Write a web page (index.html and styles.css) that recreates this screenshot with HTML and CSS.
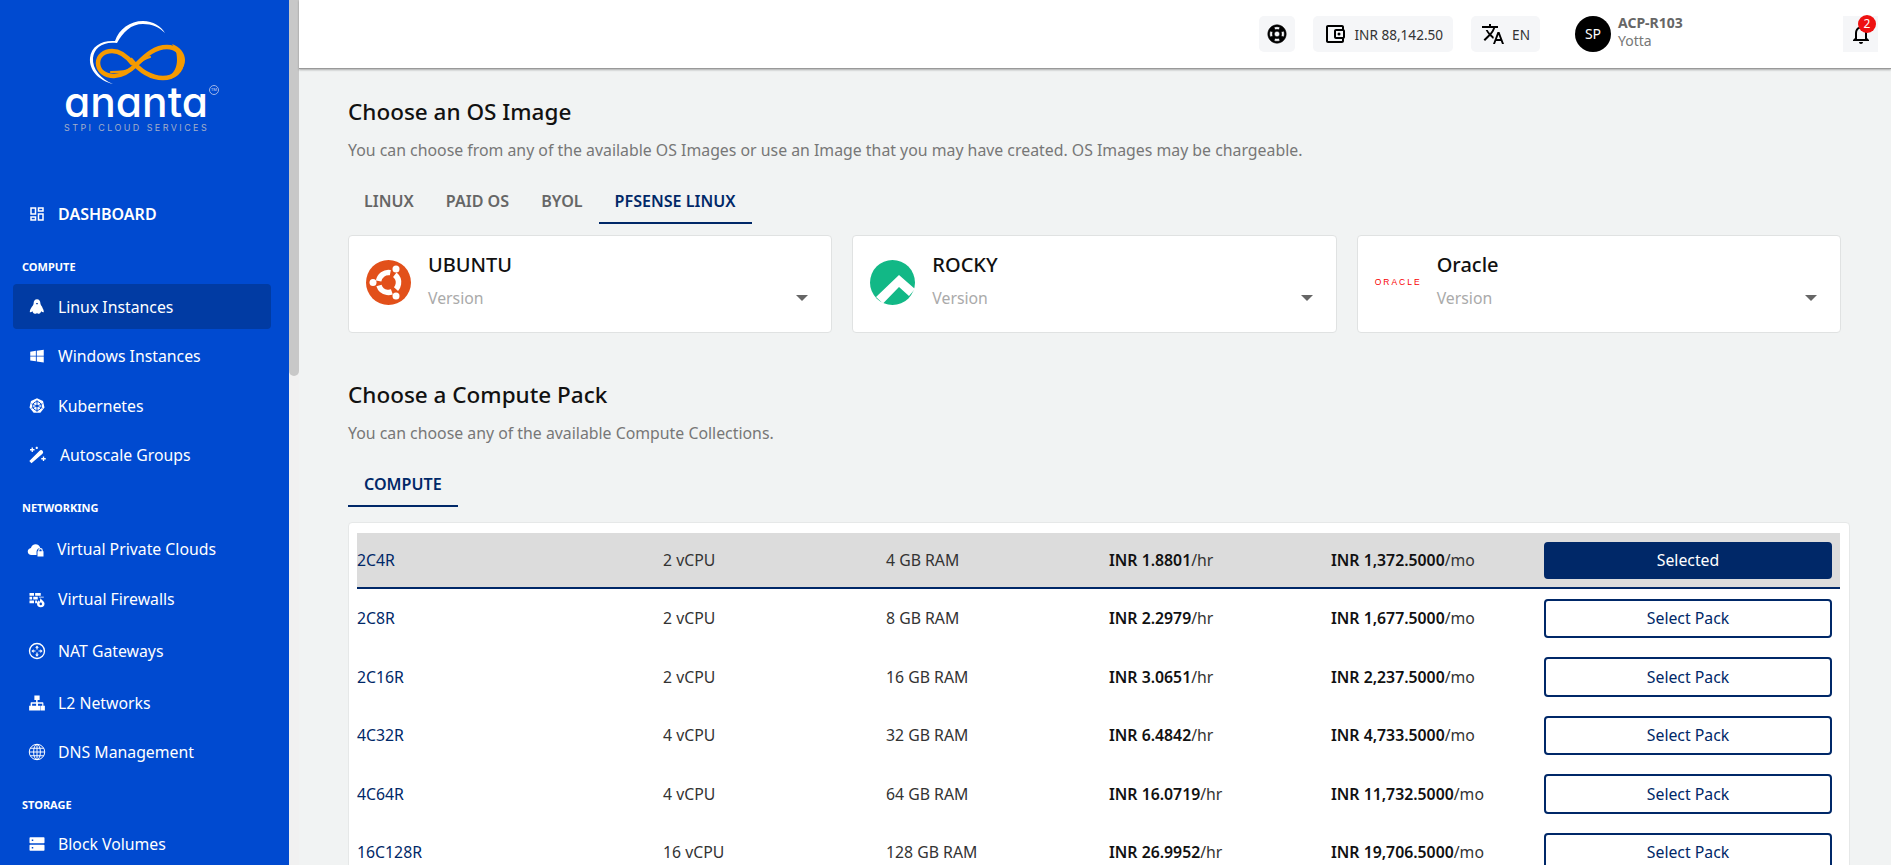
FILE: index.html
```html
<!DOCTYPE html>
<html lang="en">
<head>
  <meta charset="UTF-8">
  <title>Ananta - Create Instance</title>
  <link rel="stylesheet" href="styles.css">
</head>
<body>
  <aside class="sidebar">
    <div class="logo">
      <svg class="logo-mark" viewBox="0 0 100 68" width="100" height="68">
        <path d="M25 64C10 60 1 50 2 38 3 26 14 20 27 21 31 9 42 1 55 1c10 0 18 5 22 12-6-6-13-9-22-9-12 0-20 8-26 19C15 21 6 28 5 38c-1 11 8 21 20 26z" fill="#fff"/>
        <path d="M62 37C54 39 49 45 43 49c-5 3-11 3-20 3" fill="none" stroke="#f59a00" stroke-width="2.2" stroke-linecap="round"/>
        <path d="M45 44C38 35 31 31 24 31c-8 0-14 5-14 12 0 8 7 13 16 13 9 0 16-5 23-12 9-9 18-17 30-17 8 0 15 5 15 14 0 10-8 17-19 17-14 0-24-8-33-19" fill="none" stroke="#f59a00" stroke-width="4.5"/>
        <path d="M84 24c8 3 13 9 13 16 0 8-6 15-17 17 6-4 9-10 9-17 0-6-1-11-5-16z" fill="#f59a00"/>
      </svg>
      <div class="logo-line">
        <div class="logo-word">ananta</div>
        <div class="logo-tm">TM</div>
      </div>
      <div class="logo-sub">STPI CLOUD SERVICES</div>
    </div>

    <nav class="nav">
      <a class="nav-item nav-item--main">
        <svg class="nav-icon" viewBox="0 0 24 24"><path d="M19 5v2h-4V5h4M9 5v6H5V5h4m10 8v6h-4v-6h4M9 17v2H5v-2h4M21 3h-8v6h8V3zM11 3H3v10h8V3zm10 8h-8v10h8V11zm-10 4H3v6h8v-6z"/></svg>
        DASHBOARD
      </a>

      <div class="nav-label">COMPUTE</div>
      <a class="nav-item nav-item--active">
        <svg class="nav-icon" viewBox="0 0 24 24">
          <path d="M12 1.500C9 1.500 7.500 4 7.500 7c0 2.500-2 4-3.500 6.500-1.200 2-1.800 4-1.500 5.500 1 .3 2.500-.3 3.500-1.500.5 1.800 1.500 3 3 3.500H11l1-1.500 1 1.500h1.500c1.500-.5 2.500-1.700 3-3.500 1 1.200 2.500 1.800 3.500 1.500.3-1.500-.3-3.500-1.500-5.500C19 11 16.500 9.500 16.500 7c0-3-1.500-5.500-4.500-5.500z"/>
          <path d="M10.500 6.500h3L12 9z" fill="#013ba3"/>
        </svg>
        Linux Instances
      </a>
      <a class="nav-item">
        <svg class="nav-icon" viewBox="0 0 24 24"><path d="M3 6.200l7.500-1.100v6.400H3zM11.700 4.900L21 3.500v8H11.700zM3 12.700h7.500v6.300L3 17.900zM11.700 12.700H21v8l-9.300-1.400z"/></svg>
        Windows Instances
      </a>
      <a class="nav-item">
        <svg class="nav-icon" viewBox="0 0 24 24">
          <path d="M12 1.500l8 3.900 2 8.700-5.500 7H7.500L2 14.100l2-8.700z"/>
          <circle cx="12" cy="12" r="5.800" fill="none" stroke="#004ad0" stroke-width="1.300"/>
          <path d="M12 4v16M4.600 9l14.800 6M4.600 15l14.800-6" stroke="#004ad0" stroke-width="1.100"/>
          <circle cx="12" cy="12" r="1.600" fill="#004ad0"/>
        </svg>
        Kubernetes
      </a>
      <a class="nav-item nav-item--wand">
        <svg class="nav-icon" viewBox="0 0 24 24">
          <path d="M4 21.500L2.500 20 15.500 7c.8-.8 1.800-.8 2.500 0s.8 1.700 0 2.500z" stroke="#fff" stroke-width="2"/>
          <path d="M5 2v6M2 5h6M11 1v3M9.500 2.500h3M20 14v6M17 17h6" stroke="#fff" stroke-width="1.800"/>
        </svg>
        Autoscale Groups
      </a>

      <div class="nav-label nav-label--net">NETWORKING</div>
      <a class="nav-item nav-item--vpc">
        <svg class="nav-icon" viewBox="0 0 24 24">
          <path d="M6 20c-3 0-5-2-5-4.700 0-2.500 1.800-4.400 4.200-4.700C6 7.500 8.500 5.500 11.500 5.500c3 0 5.500 2 6.200 4.800-2.700.4-4.700 2.400-5 5v4.700z"/>
          <path d="M15 15v-1.200a3 3 0 016 0V15h1v7h-8v-7zm1.500 0h3v-1.200a1.500 1.500 0 00-3 0z"/>
        </svg>
        Virtual Private Clouds
      </a>
      <a class="nav-item">
        <svg class="nav-icon" viewBox="0 0 24 24">
          <path d="M2 4h6v3.500H2zM9.500 4H17v3.500H9.500zM2 9h3.500v3.500H2zM7 9h6v3.500H7zM2 14h6v3.500H2zM9.500 14H12v3.500H9.500zM14.500 9H21v1h-6.500z"/>
          <path d="M17 10.500c0 2.500 5 4 5 7.500a5 5 0 01-10 0c0-2 1-3.500 2-4.500.3 1.200 1 1.800 1.500 1.800.6-1.500.5-3.300 1.500-4.800z"/>
          <circle cx="17" cy="18.500" r="1.700" fill="#004ad0"/>
        </svg>
        Virtual Firewalls
      </a>
      <a class="nav-item nav-item--nat">
        <svg class="nav-icon" viewBox="0 0 24 24">
          <circle cx="12" cy="12" r="10" fill="none" stroke="#fff" stroke-width="1.800"/>
          <path d="M12 4.500l2.500 3h-1.700V10h-1.600V7.500H9.500zM12 19.500l-2.500-3h1.700V14h1.600v2.500h1.700zM4.500 12l3-2.500v1.700H10v1.600H7.500v1.700zM19.500 12l-3 2.500v-1.700H14v-1.600h2.500V9.500z"/>
        </svg>
        NAT Gateways
      </a>
      <a class="nav-item nav-item--l2">
        <svg class="nav-icon" viewBox="0 0 24 24">
          <path d="M8.500 2h7v6h-2.700v3H19.500a1 1 0 011 1v3.500h2V22h-6v-6.500h2.500V13h-5.700v2.500H16V22H8v-6.500h2.800V13H5.500v2.500H8V22H1.500v-6.500h2V12a1 1 0 011-1h6.300V8H8.500z"/>
        </svg>
        L2 Networks
      </a>
      <a class="nav-item">
        <svg class="nav-icon" viewBox="0 0 24 24">
          <g fill="none" stroke="#fff" stroke-width="1.300">
            <circle cx="12" cy="12" r="10.300"/>
            <ellipse cx="12" cy="12" rx="4.500" ry="10.300"/>
            <path d="M12 1.700v20.600M1.700 12h20.600M3 7h18M3 17h18"/>
          </g>
        </svg>
        DNS Management
      </a>

      <div class="nav-label nav-label--last">STORAGE</div>
      <a class="nav-item">
        <svg class="nav-icon" viewBox="0 0 24 24">
          <path fill-rule="evenodd" d="M3 3h18a1 1 0 011 1v6a1 1 0 01-1 1H3a1 1 0 01-1-1V4a1 1 0 011-1zm2 3v2h2V6zM3 13h18a1 1 0 011 1v6a1 1 0 01-1 1H3a1 1 0 01-1-1v-6a1 1 0 011-1zm2 3v2h2v-2z"/>
        </svg>
        Block Volumes
      </a>
    </nav>
  </aside>
  <div class="side-scroll"><div class="side-thumb"></div></div>

  <div class="page">
    <header class="topbar">
      <button class="top-btn top-btn--icon">
        <svg class="top-icon top-icon--help" viewBox="0 0 24 24"><path transform="rotate(45 12 12)" stroke="#000" stroke-width="0.6" d="M12 2C6.480 2 2 6.480 2 12s4.480 10 10 10 10-4.480 10-10S17.520 2 12 2zm7.460 7.120l-2.780 1.150c-.51-1.360-1.580-2.440-2.950-2.940l1.150-2.780c2.100.8 3.770 2.470 4.580 4.570zM12 15c-1.660 0-3-1.340-3-3s1.340-3 3-3 3 1.340 3 3-1.340 3-3 3zM9.130 4.540l1.170 2.780c-1.380.5-2.470 1.590-2.980 2.970L4.540 9.130c.81-2.110 2.480-3.780 4.590-4.590zM4.540 14.870l2.780-1.150c.51 1.380 1.590 2.460 2.970 2.960l-1.170 2.780c-2.100-.81-3.770-2.480-4.580-4.590zm10.340 4.590l-1.150-2.780c1.370-.51 2.450-1.590 2.950-2.970l2.780 1.170c-.81 2.100-2.480 3.770-4.580 4.580z"/></svg>
      </button>
      <button class="top-btn">
        <svg class="top-icon" viewBox="0 0 24 24"><path d="M21 7.280V5c0-1.100-.9-2-2-2H5c-1.110 0-2 .9-2 2v14c0 1.100.89 2 2 2h14c1.100 0 2-.9 2-2v-2.280c.59-.35 1-.98 1-1.720V9c0-.74-.41-1.370-1-1.720zM20 9v6h-7V9h7zM5 19V5h14v2h-6c-1.100 0-2 .9-2 2v6c0 1.100.9 2 2 2h6v2H5z"/><circle cx="16" cy="12" r="1.500"/></svg>
        INR 88,142.50
      </button>
      <button class="top-btn">
        <svg class="top-icon" viewBox="0 0 24 24"><path d="M12.870 15.070l-2.540-2.510.03-.03c1.740-1.940 2.980-4.170 3.710-6.530H17V4h-7V2H8v2H1v1.990h11.170C11.500 7.920 10.440 9.750 9 11.350 8.070 10.320 7.300 9.190 6.690 8h-2c.73 1.630 1.730 3.170 2.980 4.560l-5.090 5.020L4 19l5-5 3.110 3.110.76-2.040zM18.500 10h-2L12 22h2l1.120-3h4.750L21 22h2l-4.500-12zm-2.620 7l1.620-4.330L19.120 17h-3.240z"/></svg>
        EN
      </button>
      <div class="user">
        <div class="avatar">SP</div>
        <div class="user-text">
          <div class="user-name">ACP-R103</div>
          <div class="user-org">Yotta</div>
        </div>
      </div>
      <button class="top-btn top-btn--bell">
        <svg class="top-icon" viewBox="0 0 24 24"><path d="M12 22c1.100 0 2-.9 2-2h-4c0 1.100.9 2 2 2zm6-6v-5c0-3.070-1.630-5.640-4.500-6.320V4c0-.83-.67-1.500-1.500-1.500s-1.500.67-1.500 1.500v.68C7.640 5.360 6 7.920 6 11v5l-2 2v1h16v-1l-2-2zm-2 1H8v-6c0-2.480 1.510-4.500 4-4.500s4 2.020 4 4.500v6z"/></svg>
        <span class="badge">2</span>
      </button>
    </header>

    <main class="content">
      <h2 class="title">Choose an OS Image</h2>
      <p class="subtitle">You can choose from any of the available OS Images or use an Image that you may have created. OS Images may be chargeable.</p>
      <div class="tabs">
        <a class="tab">LINUX</a>
        <a class="tab">PAID OS</a>
        <a class="tab">BYOL</a>
        <a class="tab tab--active">PFSENSE LINUX</a>
      </div>

      <div class="os-grid">
        <div class="os-card">
          <svg class="os-logo" viewBox="0 0 45 45">
            <circle cx="22.5" cy="22.5" r="22.5" fill="#e2501a"/>
            <circle cx="22.5" cy="22.5" r="10" fill="none" stroke="#fff" stroke-width="5.5" stroke-dasharray="16 4.94" transform="rotate(188.5 22.5 22.5)"/>
            <circle cx="7" cy="22.5" r="3.500" fill="#fff"/>
            <circle cx="30" cy="9" r="3.500" fill="#fff"/>
            <circle cx="30" cy="36" r="3.500" fill="#fff"/>
          </svg>
          <div class="os-body">
            <div class="os-name">UBUNTU</div>
            <div class="os-select">Version<span class="caret"></span></div>
          </div>
        </div>
        <div class="os-card">
          <svg class="os-logo" viewBox="0 0 45 45">
            <circle cx="22.5" cy="22.5" r="22.5" fill="#12b886"/>
            <path d="M29 15L6 37l7 6.500L29 27l10 9 6-7z" fill="#fff"/>
          </svg>
          <div class="os-body">
            <div class="os-name">ROCKY</div>
            <div class="os-select">Version<span class="caret"></span></div>
          </div>
        </div>
        <div class="os-card">
          <div class="os-logo oracle">ORACLE</div>
          <div class="os-body">
            <div class="os-name">Oracle</div>
            <div class="os-select">Version<span class="caret"></span></div>
          </div>
        </div>
      </div>

      <h2 class="title title--second">Choose a Compute Pack</h2>
      <p class="subtitle">You can choose any of the available Compute Collections.</p>
      <div class="tabs">
        <a class="tab tab--active">COMPUTE</a>
      </div>

      <div class="packs">
        <div class="pack pack--selected">
          <span class="pack-name">2C4R</span><span>2 vCPU</span><span>4 GB RAM</span>
          <span><b>INR 1.8801</b>/hr</span><span><b>INR 1,372.5000</b>/mo</span>
          <button class="pack-btn pack-btn--on">Selected</button>
        </div>
        <div class="pack">
          <span class="pack-name">2C8R</span><span>2 vCPU</span><span>8 GB RAM</span>
          <span><b>INR 2.2979</b>/hr</span><span><b>INR 1,677.5000</b>/mo</span>
          <button class="pack-btn">Select Pack</button>
        </div>
        <div class="pack">
          <span class="pack-name">2C16R</span><span>2 vCPU</span><span>16 GB RAM</span>
          <span><b>INR 3.0651</b>/hr</span><span><b>INR 2,237.5000</b>/mo</span>
          <button class="pack-btn">Select Pack</button>
        </div>
        <div class="pack">
          <span class="pack-name">4C32R</span><span>4 vCPU</span><span>32 GB RAM</span>
          <span><b>INR 6.4842</b>/hr</span><span><b>INR 4,733.5000</b>/mo</span>
          <button class="pack-btn">Select Pack</button>
        </div>
        <div class="pack">
          <span class="pack-name">4C64R</span><span>4 vCPU</span><span>64 GB RAM</span>
          <span><b>INR 16.0719</b>/hr</span><span><b>INR 11,732.5000</b>/mo</span>
          <button class="pack-btn">Select Pack</button>
        </div>
        <div class="pack">
          <span class="pack-name">16C128R</span><span>16 vCPU</span><span>128 GB RAM</span>
          <span><b>INR 26.9952</b>/hr</span><span><b>INR 19,706.5000</b>/mo</span>
          <button class="pack-btn">Select Pack</button>
        </div>
      </div>
    </main>
  </div>
</body>
</html>
```

FILE: styles.css
```css
:root {
  --blue: #004ad0;
  --navy: #002868;
  --page-bg: #f1f3f3;
}
html, body {
  height: 100%;
  overflow: hidden;
}
body {
  margin: 0;
  display: flex;
  font-family: "Noto Sans", sans-serif;
  font-size: 15.8px;
  color: #333;
  background-color: var(--page-bg);
}

/* sidebar */
.sidebar {
  flex: 0 0 289px;
  height: 865px;
  overflow: hidden;
  background-color: var(--blue);
  color: #fff;
}
.side-scroll {
  flex: 0 0 10px;
  background-color: #f1f1f1;
}
.side-thumb {
  height: 376px;
  background-color: #c8c8c8;
  border-radius: 0 0 5px 5px;
}
.logo {
  height: 191px;
  box-sizing: border-box;
  padding: 20px 0 0 64px;
}
.logo-mark {
  display: block;
  margin-left: 24px;
}
.logo-line {
  display: flex;
  align-items: flex-start;
  gap: 1px;
  margin-top: -6px;
}
.logo-word {
  font-family: Inter, sans-serif;
  font-feature-settings: "cv11";
  font-size: 42.5px;
  font-weight: 500;
  line-height: 40px;
}
.logo-tm {
  width: 8px;
  height: 8px;
  margin-top: 3px;
  border: 1px solid #9fb6e8;
  border-radius: 50%;
  font-size: 4px;
  line-height: 8px;
  text-align: center;
  color: #cfdaf2;
}
.logo-sub {
  font-family: Inter, sans-serif;
  font-size: 9px;
  line-height: 12px;
  letter-spacing: 2.4px;
  white-space: nowrap;
  color: #a3aec9;
}
.nav {
  display: flex;
  flex-direction: column;
  gap: 4.5px;
}
.nav-item {
  display: flex;
  align-items: center;
  gap: 12px;
  height: 45px;
  margin: 0 18px 0 13px;
  padding-left: 15px;
  border-radius: 4px;
  font-size: 15.8px;
  white-space: nowrap;
}
.nav-item--main {
  font-size: 16px;
  font-weight: 600;
}
.nav-item--active {
  background-color: #013ba3;
}
.nav-item--nat {
  height: 50.5px;
}
.nav-item--l2 {
  height: 44.5px;
}
.nav-item--wand .nav-icon {
  width: 21px;
  margin-left: -1px;
}
.nav-item--vpc .nav-icon {
  width: 18px;
  margin-left: -1px;
}
.nav-icon {
  flex: none;
  width: 18px;
  height: 18px;
  fill: #fff;
}
.nav-label {
  margin: 18px 0 5px 22px;
  font-size: 11px;
  font-weight: 700;
  line-height: 16px;
}
.nav-label--net {
  margin-bottom: 6px;
}
.nav-label--last {
  margin-bottom: 4px;
}

/* top bar */
.page {
  flex: 1;
  min-width: 0;
}
.topbar {
  display: flex;
  align-items: center;
  justify-content: flex-end;
  gap: 18px;
  height: 68px;
  padding-right: 13px;
  background-color: #fff;
  border-bottom: 1px solid #999;
  box-shadow: 0 1px 2px rgba(0, 0, 0, 0.3);
}
.top-btn {
  position: relative;
  display: flex;
  align-items: center;
  gap: 7px;
  height: 36px;
  padding: 0 10px;
  border: none;
  border-radius: 5px;
  background-color: #f5f6f8;
  font-family: inherit;
  font-size: 13.6px;
  color: #333;
}
.top-btn--icon {
  width: 36px;
  padding: 0;
  justify-content: center;
}
.top-btn--bell {
  width: 35px;
  padding: 0;
  justify-content: center;
  border-radius: 0;
}
.top-icon {
  flex: none;
  width: 24px;
  height: 24px;
}
.top-icon--help {
  width: 22px;
  height: 22px;
}
.badge {
  position: absolute;
  top: -1px;
  left: 15px;
  width: 18px;
  height: 18px;
  border-radius: 50%;
  background-color: #ee1111;
  color: #fff;
  font-size: 12px;
  line-height: 18px;
  text-align: center;
}
.user {
  display: flex;
  align-items: center;
  gap: 7px;
  width: 250px;
  margin-left: 17px;
}
.avatar {
  width: 36px;
  height: 36px;
  border-radius: 50%;
  background-color: #000;
  color: #fff;
  font-size: 14px;
  line-height: 36px;
  text-align: center;
}
.user-text {
  margin-top: -4px;
}
.user-name {
  font-size: 14px;
  font-weight: 700;
  line-height: 18px;
  color: #666;
}
.user-org {
  font-size: 14px;
  line-height: 18px;
  color: #777;
}

/* main content */
.content {
  padding: 28px 41px 0 49px;
}
.title {
  margin: 0;
  font-size: 22.5px;
  font-weight: 500;
  line-height: 30px;
  color: #111;
}
.title--second {
  margin-top: 47px;
}
.subtitle {
  margin: 13px 0 0;
  font-size: 15.85px;
  line-height: 20px;
  color: #777;
}
.tabs {
  display: flex;
  margin-top: 18px;
}
.tab {
  height: 44px;
  padding: 0 16px;
  font-size: 16.1px;
  font-weight: 600;
  line-height: 47px;
  color: #666;
  border-bottom: 2px solid transparent;
}
.tab--active {
  color: var(--navy);
  border-bottom-color: var(--navy);
}
.os-grid {
  display: grid;
  grid-template-columns: repeat(3, 1fr);
  gap: 20px;
  margin: 11px 9px 0 0;
}
.os-card {
  display: flex;
  height: 98px;
  box-sizing: border-box;
  padding: 24px 0 0 17px;
  background-color: #fff;
  border: 1px solid #e0e2e2;
  border-radius: 4px;
}
.os-logo {
  flex: none;
  width: 45px;
  height: 45px;
}
.oracle {
  font-family: "Liberation Sans", sans-serif;
  font-size: 8.5px;
  line-height: 45px;
  letter-spacing: 2px;
  color: #f80000;
  white-space: nowrap;
}
.os-body {
  flex: 1;
  margin: -7px 0 0 17px;
}
.os-name {
  font-size: 20px;
  font-weight: 500;
  line-height: 24px;
  color: #111;
}
.os-select {
  display: flex;
  align-items: center;
  justify-content: space-between;
  margin-top: 11px;
  padding-right: 23px;
  font-size: 15.8px;
  line-height: 20px;
  color: #aaa;
}
.caret {
  width: 0;
  height: 0;
  border-left: 6px solid transparent;
  border-right: 6px solid transparent;
  border-top: 6px solid #666;
}
.packs {
  margin-top: 15px;
  padding: 10px 9px 0 8px;
  background-color: #fff;
  border: 1px solid #e6e8e8;
  border-radius: 4px;
}
.pack {
  display: grid;
  grid-template-columns: 306px 223px 223px 222px 213px 288px;
  align-items: center;
  height: 58.5px;
}
.pack b {
  font-weight: 600;
  color: #111;
}
.pack--selected {
  height: 56px;
  box-sizing: border-box;
  background-color: #dcdcdc;
  border-bottom: 2px solid var(--navy);
}
.pack-name {
  color: var(--navy);
}
.pack-btn {
  height: 39.5px;
  background-color: #fff;
  border: 2px solid var(--navy);
  border-radius: 4px;
  font-family: inherit;
  font-size: 15.8px;
  color: var(--navy);
}
.pack-btn--on {
  height: 37px;
  background-color: var(--navy);
  color: #fff;
}
```
